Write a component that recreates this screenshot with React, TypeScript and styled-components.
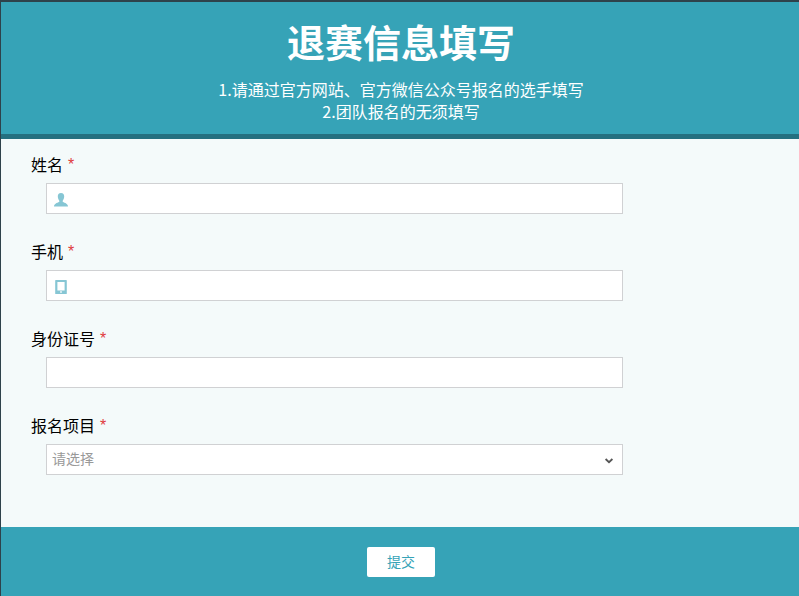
import React from 'react';
import styled, { createGlobalStyle } from 'styled-components';

const GlobalStyle = createGlobalStyle`
  *, *::before, *::after {
    box-sizing: border-box;
  }
  body {
    margin: 0;
    background: #f4fafa;
    font-family: "Noto Sans CJK SC", "Microsoft YaHei", sans-serif;
    font-size: 16px;
    line-height: 22px;
    color: #000;
  }
`;

const Page = styled.div`
  display: flex;
  flex-direction: column;
  min-height: 100vh;
  border-top: 2px solid #2e424b;
  border-left: 1px solid #2e424b;
`;

const Header = styled.header`
  padding: 14px 20px 12px 22px;
  background: #36a3b7;
  border-bottom: 5px solid #257080;
  color: #fff;
  text-align: center;
`;

const Title = styled.h1`
  margin: 0 0 12px;
  font-size: 38px;
  line-height: 50px;
  font-weight: 700;
`;

const Note = styled.p`
  margin: 0;
`;

const Form = styled.form`
  display: flex;
  flex: 1;
  flex-direction: column;
`;

const Fields = styled.div`
  display: flex;
  flex: 1;
  flex-direction: column;
  gap: 27px;
  padding: 15px 30px 52px;
`;

const Field = styled.div`
  display: flex;
  flex-direction: column;
  gap: 7px;
`;

const Label = styled.label`
  display: flex;
  gap: 5px;
  line-height: 20px;
`;

const Required = styled.span`
  color: #e03c3c;
  font-family: "Liberation Sans", Arial, sans-serif;
  font-size: 16px;
  line-height: 22px;
`;

const Control = styled.div`
  display: flex;
  align-items: center;
  max-width: 577px;
  height: 31px;
  margin-left: 15px;
  padding: 0 8px 0 6px;
  background: #fff;
  border: 1px solid #d0d1d3;

  & > svg {
    flex: none;
    margin-top: 2px;
  }
`;

const TextInput = styled.input`
  flex: 1;
  min-width: 0;
  height: 100%;
  padding: 0 6px;
  border: 0;
  outline: 0;
  background: transparent;
  font: inherit;
  font-size: 14px;
`;

const SelectControl = styled(Control)`
  padding-left: 5px;
`;

const Select = styled.select`
  flex: 1;
  min-width: 0;
  height: 100%;
  padding: 0 0 3px;
  border: 0;
  outline: 0;
  appearance: none;
  background: transparent;
  color: #999;
  font: inherit;
  font-size: 14px;
`;

const Footer = styled.footer`
  display: flex;
  justify-content: center;
  padding: 20px 20px 19px 22px;
  background: #36a3b7;
`;

const Submit = styled.button`
  height: 30px;
  padding: 0 20px 2px;
  border: 0;
  border-radius: 2px;
  background: #fff;
  color: #36a3b7;
  font: inherit;
  font-size: 14px;
  cursor: pointer;
`;

const PersonIcon = () => (
  <svg width="16" height="14" viewBox="0 0 16 14" fill="#86c6d4" aria-hidden="true">
    <path d="M8 0C5.7 0 4.7 1.5 4.8 3.6C4.9 5.8 5.7 7 6.3 7.7V8.8C6 9.6 1 10 1 13.6H15C15 10 10 9.6 9.7 8.8V7.7C10.3 7 11.1 5.8 11.2 3.6C11.3 1.5 10.3 0 8 0Z" />
  </svg>
);

const PhoneIcon = () => (
  <svg width="16" height="14" viewBox="0 0 16 14" aria-hidden="true">
    <path
      fill="#86c6d4"
      fillRule="evenodd"
      d="M2.4 0H13.2Q13.8 0 13.8 .6V13.4Q13.8 14 13.2 14H2.8Q2.2 14 2.2 13.4V.6Q2.2 0 2.8 0ZM4.4 2V10.4H11.6V2ZM7.2 11.3V12.8H8.8V11.3Z"
    />
  </svg>
);

const Chevron = () => (
  <svg width="10" height="8" viewBox="0 0 10 8" fill="none" aria-hidden="true">
    <path d="M1.6 2L5 5.2L8.4 2" stroke="#555" strokeWidth="1.8" />
  </svg>
);

const fields = [
  { id: 'name', label: '姓名', type: 'text', icon: <PersonIcon /> },
  { id: 'phone', label: '手机', type: 'tel', icon: <PhoneIcon /> },
  { id: 'idcard', label: '身份证号', type: 'text', icon: null },
];

const FieldLabel = ({ id, children }: { id: string; children: React.ReactNode }) => (
  <Label htmlFor={id}>
    {children}
    <Required>*</Required>
  </Label>
);

export default function App() {
  return (
    <>
      <GlobalStyle />
      <Page>
        <Header>
          <Title>退赛信息填写</Title>
          <Note>1.请通过官方网站、官方微信公众号报名的选手填写</Note>
          <Note>2.团队报名的无须填写</Note>
        </Header>
        <Form onSubmit={(e) => e.preventDefault()}>
          <Fields>
            {fields.map((f) => (
              <Field key={f.id}>
                <FieldLabel id={f.id}>{f.label}</FieldLabel>
                <Control>
                  {f.icon}
                  <TextInput id={f.id} name={f.id} type={f.type} />
                </Control>
              </Field>
            ))}
            <Field>
              <FieldLabel id="event">报名项目</FieldLabel>
              <SelectControl>
                <Select id="event" name="event" defaultValue="">
                  <option value="">请选择</option>
                </Select>
                <Chevron />
              </SelectControl>
            </Field>
          </Fields>
          <Footer>
            <Submit type="submit">提交</Submit>
          </Footer>
        </Form>
      </Page>
    </>
  );
}
